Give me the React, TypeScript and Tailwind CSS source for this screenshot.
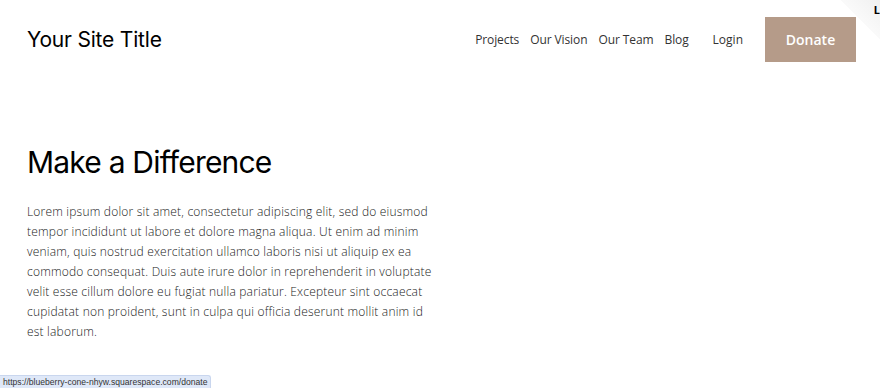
import React from 'react';

const navLinks = ['Projects', 'Our Vision', 'Our Team', 'Blog'];

const body =
  'Lorem ipsum dolor sit amet, consectetur adipiscing elit, sed do eiusmod tempor incididunt ut labore et dolore magna aliqua. Ut enim ad minim veniam, quis nostrud exercitation ullamco laboris nisi ut aliquip ex ea commodo consequat. Duis aute irure dolor in reprehenderit in voluptate velit esse cillum dolore eu fugiat nulla pariatur. Excepteur sint occaecat cupidatat non proident, sunt in culpa qui officia deserunt mollit anim id est laborum.';

const App: React.FC = () => {
  return (
    <div className="relative w-[880px] h-[388px] overflow-hidden bg-white text-black">
      <header className="flex items-center justify-between pl-[27px] pr-[24px] pt-[17px]">
        <div className="text-[21px] font-['Inter',sans-serif] tracking-[-0.2px]">Your Site Title</div>
        <nav className="flex items-center font-['Open_Sans',sans-serif] text-[12px] text-[#333]">
          <div className="flex items-center gap-[11px] tracking-[-0.1px]">
            {navLinks.map((l) => (
              <a key={l} className="cursor-pointer">
                {l}
              </a>
            ))}
          </div>
          <a className="ml-[24px] cursor-pointer">Login</a>
          <a className="ml-[22px] flex h-[45px] w-[91px] items-center justify-center bg-[#b59b89] text-[14px] font-semibold text-white">
            Donate
          </a>
        </nav>
      </header>

      <main className="pl-[27px] pt-[80px]">
        <h1 className="font-['Inter',sans-serif] text-[30px] leading-[40px] tracking-[-0.8px]">Make a Difference</h1>
        <p className="mt-[20px] w-[412px] font-['Open_Sans',sans-serif] text-[12px] font-light leading-[20px] tracking-[0.2px] text-[#222]">
          {body}
        </p>
      </main>

      <div className="absolute right-0 top-0 h-[40px] w-[40px] bg-[linear-gradient(225deg,#f0f0f0_0%,#fafafa_50%,transparent_50%)]" />
      <span className="absolute right-[0px] top-[4px] text-[11px] font-bold leading-none">L</span>

      <div className="absolute bottom-0 left-0 rounded-tr-[3px] border-t border-r border-[#c9d6ee] bg-[#dfe8f8] px-[3px] font-['Liberation_Sans',sans-serif] text-[8.6px] leading-[12px] text-[#333]">
        https://blueberry-cone-nhyw.squarespace.com/donate
      </div>
    </div>
  );
};

export default App;
